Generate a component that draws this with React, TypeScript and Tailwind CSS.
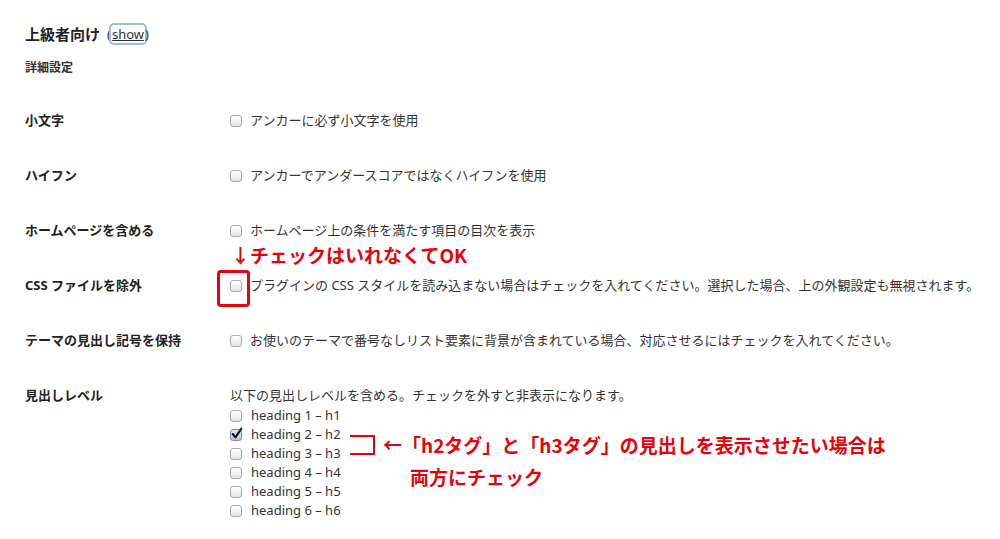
import React from "react";

const font = { fontFamily: '"Noto Sans", "Noto Sans CJK JP", sans-serif' };

function Box({ checked = false }: { checked?: boolean }) {
  return (
    <span
      className={
        "relative inline-block h-[12px] w-[12px] shrink-0 rounded-[3px] border " +
        (checked
          ? "border-[#7a8aa8] bg-gradient-to-b from-[#dfe6f3] to-[#b9c6de]"
          : "border-[#a9a9a9] bg-gradient-to-b from-white to-[#e4e4e4]")
      }
    >
      {checked && (
        <svg viewBox="0 0 12 12" className="absolute -left-[1px] -top-[3px] h-[13px] w-[13px]">
          <path d="M2.5 6.5 L5 9.5 L10.5 1.5" fill="none" stroke="#1a1a1a" strokeWidth="2" strokeLinecap="round" strokeLinejoin="round" />
        </svg>
      )}
    </span>
  );
}

const rows = [
  { label: "小文字", text: "アンカーに必ず小文字を使用" },
  { label: "ハイフン", text: "アンカーでアンダースコアではなくハイフンを使用" },
  { label: "ホームページを含める", text: "ホームページ上の条件を満たす項目の目次を表示" },
  { label: "CSS ファイルを除外", text: "プラグインの CSS スタイルを読み込まない場合はチェックを入れてください。選択した場合、上の外観設定も無視されます。" },
  { label: "テーマの見出し記号を保持", text: "お使いのテーマで番号なしリスト要素に背景が含まれている場合、対応させるにはチェックを入れてください。" },
];

export default function App() {
  return (
    <div className="relative h-[539px] w-[1000px] overflow-hidden bg-white px-[25px] pt-[24px] text-[#333]" style={font}>
      <div className="flex items-center text-[15px] font-bold leading-[20px] text-[#222]">
        上級者向け
        <span className="ml-[7px] text-[13px] font-normal text-[#333]">
          (<span className="rounded-[3px] px-[1px] underline shadow-[0_0_0_2px_#8fc1ea]">show</span>)
        </span>
      </div>
      <div className="mt-[15px] text-[12px] font-bold leading-[18px] text-[#333]">詳細設定</div>

      <div className="mt-[16px]">
        {rows.map((r) => (
          <div key={r.label} className="grid h-[55px] grid-cols-[205px_1fr] items-center text-[13px] leading-[19px]">
            <div className="font-bold text-[#222]">{r.label}</div>
            <div className="flex items-center gap-[8px] whitespace-nowrap">
              <Box />
              <span>{r.text}</span>
            </div>
          </div>
        ))}
        <div className="grid grid-cols-[205px_1fr] pt-[18px] text-[13px] leading-[19px]">
          <div className="font-bold text-[#222]">見出しレベル</div>
          <div>
            <div className="mb-[1px]">以下の見出しレベルを含める。チェックを外すと非表示になります。</div>
            {[1, 2, 3, 4, 5, 6].map((n) => (
              <div key={n} className="flex h-[19px] items-center gap-[9px]">
                <Box checked={n === 2} />
                <span>heading {n} – h{n}</span>
              </div>
            ))}
          </div>
        </div>
      </div>

      {/* annotations */}
      <div className="absolute left-[231px] top-[243px] text-[19px] font-bold leading-[24px] text-[#e8000b]" style={{ fontFamily: '"Noto Sans CJK JP", sans-serif' }}>
        ↓チェックはいれなくてOK
      </div>
      <div className="absolute left-[217px] top-[270px] h-[37px] w-[33px] rounded-[4px] border-[3px] border-[#e8000b]" />
      <div className="absolute left-[350px] top-[435px] h-[20px] w-[25px] border-y-2 border-r-2 border-[#e8000b]" />
      <div className="absolute left-[383px] top-[429px] text-[19px] font-bold leading-[32px] text-[#e8000b]" style={{ fontFamily: '"Noto Sans CJK JP", sans-serif' }}>
        <div>←「h2タグ」と「h3タグ」の見出しを表示させたい場合は</div>
        <div className="pl-[27px]">両方にチェック</div>
      </div>
    </div>
  );
}
